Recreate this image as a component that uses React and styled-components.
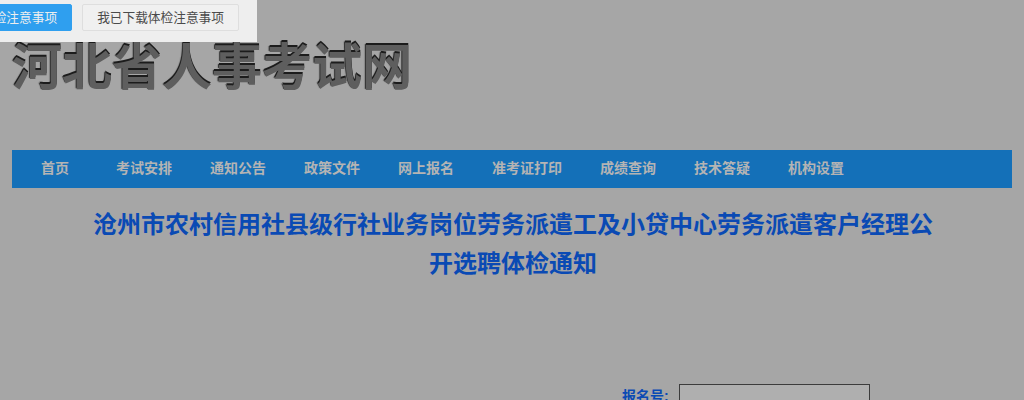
import React from "react";
import styled, { createGlobalStyle } from "styled-components";

const GlobalStyle = createGlobalStyle`
  html, body {
    margin: 0;
    height: 400px;
    overflow: hidden;
  }
  body {
    font-family: "Liberation Sans", "Noto Sans CJK SC", sans-serif;
    background: #a6a6a6;
  }
`;

const Page = styled.div`
  width: 1024px;
  height: 400px;
  padding: 0 12px;
  box-sizing: border-box;
  overflow: hidden;
`;

const Header = styled.header`
  height: 150px;
  padding-top: 38px;
  box-sizing: border-box;
`;

const Logo = styled.h1`
  margin: 0;
  font-size: 50px;
  line-height: 60px;
  font-weight: 700;
  color: #5e5e5e;
  text-shadow: 0 -2px 0 #1c1c1c, -1px -1px 1px #2c2c2c;
`;

const Nav = styled.nav`
  display: flex;
  align-items: center;
  height: 38px;
  padding-left: 29px;
  gap: 38px;
  background: #1470b8;
`;

const NavItem = styled.a`
  font-size: 14px;
  font-weight: 700;
  line-height: 36px;
  height: 38px;
  color: #b4b4b4;
  margin-right: ${(p) => (p.$wide ? "9px" : "0")};
`;

const Notice = styled.h2`
  margin: 17px 0 0;
  padding: 0 78px 0 80px;
  font-size: 24px;
  line-height: 39px;
  font-weight: 700;
  text-align: center;
  color: #0a4ab4;
`;

const QueryRow = styled.div`
  display: flex;
  align-items: flex-start;
  margin: 101px 0 0 610px;
  gap: 10px;
`;

const QueryLabel = styled.label`
  font-size: 14px;
  line-height: 22px;
  padding-top: 1px;
  font-weight: 700;
  color: #0a4ab4;
`;

const QueryInput = styled.input`
  width: 191px;
  height: 30px;
  padding: 0;
  box-sizing: border-box;
  border: 1px solid #3c3c3c;
  background: #afafaf;
`;

const Dialog = styled.div`
  position: absolute;
  left: -60px;
  top: -40px;
  width: 317px;
  height: 82px;
  background: #eeeeee;
`;

const DialogActions = styled.div`
  position: absolute;
  right: 18px;
  bottom: 11px;
  display: flex;
  gap: 10px;
`;

const DialogButton = styled.button`
  height: 27px;
  padding: 0 14px 3px;
  font-family: inherit;
  font-size: 12.7px;
  white-space: nowrap;
  border-radius: 2px;
  border: 1px solid ${(p) => (p.$primary ? "#2f9fef" : "#dedede")};
  background: ${(p) => (p.$primary ? "#2f9fef" : "#f0f0f0")};
  color: ${(p) => (p.$primary ? "#eeeeee" : "#4a4a4a")};
`;

const menu = ["考试安排", "通知公告", "政策文件", "网上报名", "准考证打印", "成绩查询", "技术答疑", "机构设置"];

export default function App() {
  return (
    <Page>
      <GlobalStyle />
      <Header>
        <Logo>河北省人事考试网</Logo>
      </Header>
      <Nav>
        <NavItem $wide>首页</NavItem>
        {menu.map((m) => (
          <NavItem key={m}>{m}</NavItem>
        ))}
      </Nav>
      <Notice>沧州市农村信用社县级行社业务岗位劳务派遣工及小贷中心劳务派遣客户经理公开选聘体检通知</Notice>
      <QueryRow>
        <QueryLabel>报名号:</QueryLabel>
        <QueryInput />
      </QueryRow>
      <Dialog>
        <DialogActions>
          <DialogButton $primary>下载体检注意事项</DialogButton>
          <DialogButton>我已下载体检注意事项</DialogButton>
        </DialogActions>
      </Dialog>
    </Page>
  );
}
